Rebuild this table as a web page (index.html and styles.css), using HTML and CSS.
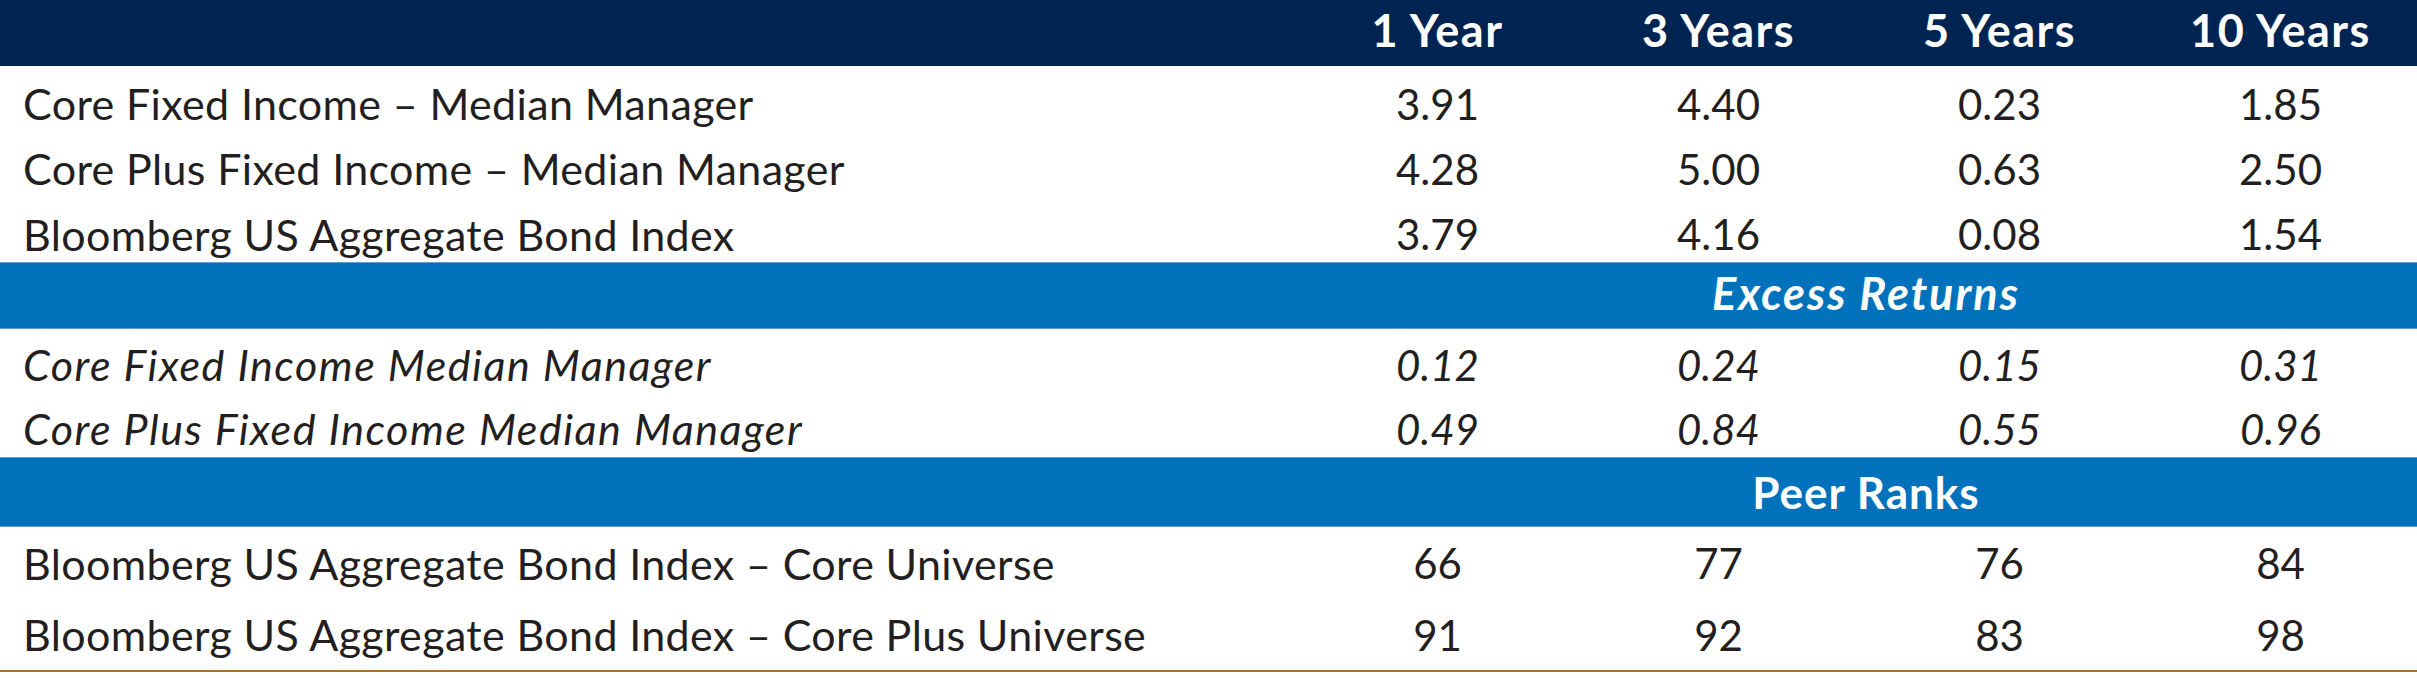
FILE: index.html
```html
<!DOCTYPE html>
<html lang="en">
<head>
<meta charset="utf-8">
<title>Fixed Income Returns</title>
<link rel="stylesheet" href="styles.css">
</head>
<body>
<div class="table">
  <div class="row head">
    <div class="label"></div>
    <div class="num">1 Year</div>
    <div class="num">3 Years</div>
    <div class="num">5 Years</div>
    <div class="num">10 Years</div>
  </div>
  <div class="row r1">
    <div class="label">Core Fixed Income – Median Manager</div>
    <div class="num">3.91</div><div class="num">4.40</div><div class="num">0.23</div><div class="num">1.85</div>
  </div>
  <div class="row r1">
    <div class="label">Core Plus Fixed Income – Median Manager</div>
    <div class="num">4.28</div><div class="num">5.00</div><div class="num">0.63</div><div class="num">2.50</div>
  </div>
  <div class="row r1 r1-last">
    <div class="label">Bloomberg US Aggregate Bond Index</div>
    <div class="num">3.79</div><div class="num">4.16</div><div class="num">0.08</div><div class="num">1.54</div>
  </div>
  <div class="row band band-ex">
    <div class="label"></div>
    <div class="band-title italic">Excess Returns</div>
  </div>
  <div class="row r2 italic">
    <div class="label">Core Fixed Income Median Manager</div>
    <div class="num">0.12</div><div class="num">0.24</div><div class="num">0.15</div><div class="num">0.31</div>
  </div>
  <div class="row r2 italic">
    <div class="label">Core Plus Fixed Income Median Manager</div>
    <div class="num">0.49</div><div class="num">0.84</div><div class="num">0.55</div><div class="num">0.96</div>
  </div>
  <div class="row band band-peer">
    <div class="label"></div>
    <div class="band-title">Peer Ranks</div>
  </div>
  <div class="row r3">
    <div class="label">Bloomberg US Aggregate Bond Index – Core Universe</div>
    <div class="num">66</div><div class="num">77</div><div class="num">76</div><div class="num">84</div>
  </div>
  <div class="row r3 r3-last">
    <div class="label">Bloomberg US Aggregate Bond Index – Core Plus Universe</div>
    <div class="num">91</div><div class="num">92</div><div class="num">83</div><div class="num">98</div>
  </div>
</div>
</body>
</html>
```
FILE: styles.css
```css
html, body {
  margin: 0;
  padding: 0;
  background: #ffffff;
}

body {
  width: 2417px;
  height: 678px;
  overflow: hidden;
  font-family: "Lato", "Liberation Sans", sans-serif;
  color: #231f20;
}

.table {
  display: flex;
  flex-direction: column;
  border-bottom: 2px solid #a8732f;
}

.row {
  display: grid;
  grid-template-columns: 1fr repeat(4, 281px);
  align-items: center;
  box-sizing: border-box;
  font-size: 42px;
  line-height: 1;
}

.label {
  padding-left: 23px;
  white-space: nowrap;
  font-size: 43px;
  letter-spacing: 0.36px;
}

.num {
  text-align: center;
  padding-left: 8px;
  white-space: nowrap;
}

.italic {
  font-style: italic;
}

.r2 .label {
  letter-spacing: 1.5px;
}

.head {
  height: 66px;
  background: #002451;
  color: #ffffff;
  font-weight: 700;
  font-size: 45px;
  letter-spacing: 1.5px;
  padding-bottom: 5px;
}

.r1 {
  height: 65px;
  padding-top: 10px;
}

.r1-last {
  height: 66px;
}

.band {
  background: #0072bc;
  color: #ffffff;
  font-weight: 700;
  border-top: 1px solid #5d9fd3;
  border-bottom: 1px solid #5d9fd3;
}

.band-title {
  grid-column: 2 / 6;
  text-align: center;
  padding-left: 22px;
}

.band-ex {
  height: 67px;
  padding-bottom: 4px;
  font-size: 45px;
  letter-spacing: 2px;
}

.band-peer {
  height: 70px;
  padding-bottom: 1px;
  font-size: 44px;
  letter-spacing: 1px;
}

.r2 {
  height: 64px;
  padding-top: 7px;
}

.r3 {
  height: 72px;
}

.r3-last {
  height: 71px;
}
```
